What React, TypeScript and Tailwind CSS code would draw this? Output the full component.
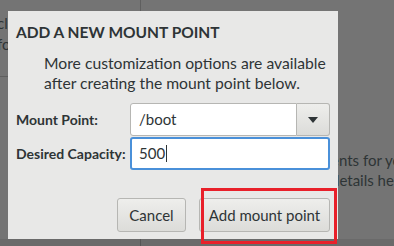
function Backdrop() {
  return (
    <div className="absolute inset-0 text-[15px] text-[#2e3436] [font-family:Lato,sans-serif]">
      {/* window behind the dialog */}
      <div className="absolute left-[140px] top-0 h-full w-px bg-[#5f5f5f]" />
      <div className="absolute left-0 top-[76px] h-px w-[140px] bg-[#5f5f5f]" />
      <div className="absolute left-[-3px] top-[13px] leading-[21px]">
        <div>cl</div>
        <div>fo</div>
      </div>
      <div className="absolute left-[331px] top-[150px] whitespace-nowrap leading-[20px]">
        <div>ents for you</div>
        <div>details here</div>
      </div>
      <div className="absolute left-0 top-[239px] h-[7px] w-full bg-[#6a6a6a]">
        <div className="ml-[140px] h-full w-px bg-[#555]" />
      </div>
    </div>
  )
}

export default function App() {
  return (
    <div className="relative h-[246px] w-[394px] overflow-hidden bg-[#747474]">
      <Backdrop />

      {/* dialog */}
      <div className="absolute left-[8px] top-[11px] flex h-[228px] w-[330px] flex-col whitespace-nowrap bg-[#e8e8e7] px-2 text-[#2e3436] [font-family:Lato,sans-serif]">
        <h1 className="mt-[10px] text-[15.5px] font-bold leading-[22px]">ADD A NEW MOUNT POINT</h1>
        <p className="mt-[10px] pl-[28px] text-[15.7px] leading-[20px]">
          More customization options are available
          <br />
          after creating the mount point below.
        </p>

        <div className="mt-[10px] grid grid-cols-[114px_1fr] items-center gap-y-px">
          <label className="text-[14px] font-bold">Mount Point:</label>
          <div className="flex h-[33px]">
            <div className="flex flex-1 items-center rounded-l-[3px] border border-[#b6b6b3] bg-white pl-2 text-[15px]">/boot</div>
            <button className="flex w-[33px] items-center justify-center rounded-r-[3px] border border-l-0 border-[#b6b6b3] bg-gradient-to-b from-[#eeeeec] to-[#dcdcd9]">
              <svg width="10" height="6" viewBox="0 0 10 6"><path d="M0 0h10L5 6z" fill="#2e3436" /></svg>
            </button>
          </div>
          <label className="text-[14px] font-bold">Desired Capacity:</label>
          <div className="flex h-[33px] items-center rounded-[3px] border-2 border-[#4a90d9] bg-white pl-[7px] text-[15px]">
            500<span className="ml-px inline-block h-[17px] w-px bg-[#2e3436]" />
          </div>
        </div>

        <div className="mt-auto mb-[7px] flex justify-end gap-[13px]">
          <button className="h-[34px] w-[69px] rounded-[3px] border border-[#b6b6b3] bg-gradient-to-b from-[#eeeeec] to-[#dcdcd9] text-[15px] text-[#2e3436]">Cancel</button>
          <button className="h-[34px] w-[131px] rounded-[3px] border border-[#b6b6b3] bg-gradient-to-b from-[#eeeeec] to-[#dcdcd9] text-[15px] text-[#2e3436]">Add mount point</button>
        </div>
      </div>

      {/* annotation */}
      <div className="absolute left-[201px] top-[188px] h-[56px] w-[136px] border-[3px] border-[#e8202a]" />
    </div>
  )
}
